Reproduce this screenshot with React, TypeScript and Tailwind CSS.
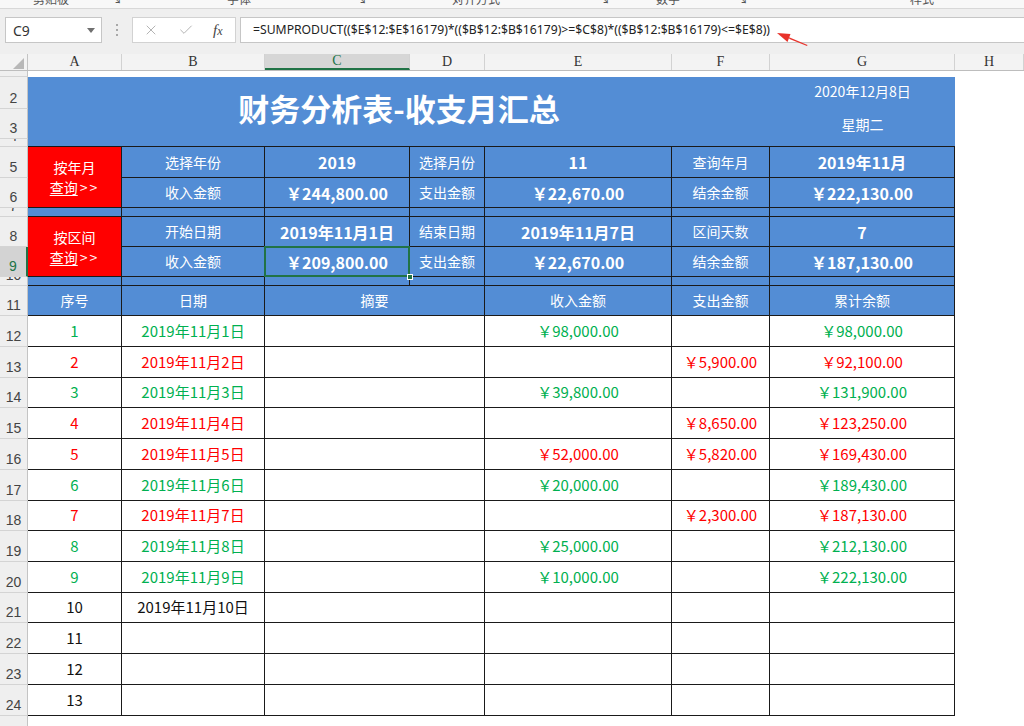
import React from 'react';
import { X, Check } from 'lucide-react';

// column widths (A..G) taken from the sheet, row header is 28px
const W = {
  A: 'w-[94px]',
  B: 'w-[143px]',
  C: 'w-[145px]',
  D: 'w-[75px]',
  E: 'w-[187px]',
  F: 'w-[98px]',
  G: 'w-[185px]',
  CD: 'w-[220px]',
};

const LABEL = 'bg-[#538dd5] text-white text-[14px]';
const VALUE = 'bg-[#538dd5] text-white text-[16px] font-bold';

function RowHead({ n, h, active = false }: { n: number; h: string; active?: boolean }) {
  return (
    <div
      className={`${h} w-[28px] shrink-0 flex items-end justify-center overflow-hidden border-b border-b-[#d4d4d4] font-['Liberation_Sans',sans-serif] text-[14px] leading-[17px] ${
        active
          ? 'bg-[#d3d3d3] text-[#217346] border-r-2 border-r-[#217346]'
          : 'bg-[#efefef] text-[#444] border-r border-r-[#c4c4c4]'
      }`}
    >
      <span className="pb-[1px]">{n}</span>
    </div>
  );
}

function Cell({ w, className = '', children }: { w: string; className?: string; children?: React.ReactNode }) {
  return (
    <div className={`${w} h-full shrink-0 flex items-center justify-center border-r border-b border-[#1a1a1a] ${className}`}>
      {children}
    </div>
  );
}

function ColHead({ w, label, active = false }: { w: string; label: string; active?: boolean }) {
  return (
    <div
      className={`${w} shrink-0 flex items-center justify-center border-r border-r-[#d2d2d2] ${
        active ? 'bg-[#d6d6d6] text-[#217346] border-b-2 border-b-[#217346]' : 'text-[#333]'
      }`}
    >
      {label}
    </div>
  );
}

function Filler() {
  return <div className="flex-1 h-full bg-white" />;
}

function ThinBand({ n }: { n: number }) {
  return (
    <div className="flex h-[9px]">
      <RowHead n={n} h="h-[9px]" />
      <Cell w={W.A} className="bg-[#538dd5]" />
      <Cell w={W.B} className="bg-[#538dd5]" />
      <Cell w={W.C} className="bg-[#538dd5]" />
      <Cell w={W.D} className="bg-[#538dd5]" />
      <Cell w={W.E} className="bg-[#538dd5]" />
      <Cell w={W.F} className="bg-[#538dd5]" />
      <Cell w={W.G} className="bg-[#538dd5]" />
      <Filler />
    </div>
  );
}

function QueryButton({ first }: { first: string }) {
  return (
    <div className="w-[94px] h-full shrink-0 bg-[#ff0000] border-r border-b border-[#1a1a1a] flex flex-col items-center justify-center text-white text-[14px] leading-[20px]">
      <span>{first}</span>
      <span>
        <span className="underline underline-offset-2">查询</span>
        <span className="tracking-[2px] pl-[2px]">&gt;&gt;</span>
      </span>
    </div>
  );
}

type Tone = 'g' | 'r' | 'k';

const toneClass: Record<Tone, string> = {
  g: 'text-[#00b050]',
  r: 'text-[#ff0000]',
  k: 'text-[#111]',
};

const records: { n: number; h: string; date: string; inc: string; exp: string; bal: string; tone: Tone }[] = [
  { n: 1, h: 'h-[31px]', date: '2019年11月1日', inc: '￥98,000.00', exp: '', bal: '￥98,000.00', tone: 'g' },
  { n: 2, h: 'h-[31px]', date: '2019年11月2日', inc: '', exp: '￥5,900.00', bal: '￥92,100.00', tone: 'r' },
  { n: 3, h: 'h-[30px]', date: '2019年11月3日', inc: '￥39,800.00', exp: '', bal: '￥131,900.00', tone: 'g' },
  { n: 4, h: 'h-[31px]', date: '2019年11月4日', inc: '', exp: '￥8,650.00', bal: '￥123,250.00', tone: 'r' },
  { n: 5, h: 'h-[31px]', date: '2019年11月5日', inc: '￥52,000.00', exp: '￥5,820.00', bal: '￥169,430.00', tone: 'r' },
  { n: 6, h: 'h-[31px]', date: '2019年11月6日', inc: '￥20,000.00', exp: '', bal: '￥189,430.00', tone: 'g' },
  { n: 7, h: 'h-[30px]', date: '2019年11月7日', inc: '', exp: '￥2,300.00', bal: '￥187,130.00', tone: 'r' },
  { n: 8, h: 'h-[31px]', date: '2019年11月8日', inc: '￥25,000.00', exp: '', bal: '￥212,130.00', tone: 'g' },
  { n: 9, h: 'h-[31px]', date: '2019年11月9日', inc: '￥10,000.00', exp: '', bal: '￥222,130.00', tone: 'g' },
  { n: 10, h: 'h-[30px]', date: '2019年11月10日', inc: '', exp: '', bal: '', tone: 'k' },
  { n: 11, h: 'h-[31px]', date: '', inc: '', exp: '', bal: '', tone: 'k' },
  { n: 12, h: 'h-[31px]', date: '', inc: '', exp: '', bal: '', tone: 'k' },
  { n: 13, h: 'h-[31px]', date: '', inc: '', exp: '', bal: '', tone: 'k' },
];

function TopBars() {
  return (
    <div className="relative">
      {/* bottom edge of the ribbon, group labels cut off */}
      <div className="h-[9px] overflow-hidden bg-[#f8f8f8] border-b border-[#d8d8d8] flex text-[12px] leading-[14px] text-[#555] font-['Noto_Sans_CJK_SC',sans-serif]">
        <span className="w-[33px] shrink-0" />
        <span className="w-[77px] shrink-0 -mt-[8px]">剪贴板</span>
        <span className="w-[117px] shrink-0 -mt-[8px]">↘</span>
        <span className="w-[128px] shrink-0 -mt-[8px]">字体</span>
        <span className="w-[97px] shrink-0 -mt-[8px]">↘</span>
        <span className="w-[146px] shrink-0 -mt-[8px]">对齐方式</span>
        <span className="w-[58px] shrink-0 -mt-[8px]">↘</span>
        <span className="w-[80px] shrink-0 -mt-[8px]">数字</span>
        <span className="w-[174px] shrink-0 -mt-[8px]">↘</span>
        <span className="shrink-0 -mt-[8px]">样式</span>
      </div>
      <div className="h-[45px] bg-[#efefef] flex items-start pt-[8px]">
        <div className="ml-[5px] w-[97px] h-[26px] shrink-0 bg-white border border-[#c6c6c6] flex items-center pl-[7px] pr-[6px] text-[14px] text-[#333] font-['Noto_Sans',sans-serif]">
          <span>C9</span>
          <svg className="ml-auto" width="8" height="5" viewBox="0 0 8 5">
            <polygon points="0,0 8,0 4,5" fill="#707070" />
          </svg>
        </div>
        <div className="w-[30px] h-[26px] shrink-0 flex flex-col items-center justify-center gap-[3px]">
          <span className="w-[2px] h-[2px] bg-[#a8a8a8]" />
          <span className="w-[2px] h-[2px] bg-[#a8a8a8]" />
          <span className="w-[2px] h-[2px] bg-[#a8a8a8]" />
        </div>
        <div className="w-[104px] h-[26px] shrink-0 bg-white border border-[#d2d2d2] flex items-center">
          <X className="ml-[10px] text-[#b4b4b4]" size={16} strokeWidth={1.5} />
          <Check className="ml-[19px] text-[#b4b4b4]" size={16} strokeWidth={1.5} />
          <span className="ml-[19px] italic text-[15px] text-[#444] font-['Liberation_Serif',serif]">
            f<span className="text-[12px]">x</span>
          </span>
        </div>
        <div className="ml-[4px] flex-1 h-[26px] bg-white border border-r-0 border-[#c6c6c6] flex items-center pl-[12px] text-[12.2px] text-[#222] font-['Noto_Sans',sans-serif] whitespace-nowrap overflow-hidden">
          =SUMPRODUCT(($E$12:$E$16179)*(($B$12:$B$16179)&gt;=$C$8)*(($B$12:$B$16179)&lt;=$E$8))
        </div>
      </div>
      {/* red annotation arrow */}
      <svg className="absolute left-[770px] top-[26px]" width="40" height="26" viewBox="0 0 40 26">
        <polygon points="7,7 20.5,8 17.5,16" fill="#e8332b" />
        <polygon points="18.5,11 19.5,13 37,20 37.5,19" fill="#e8332b" />
      </svg>
    </div>
  );
}

export default function App() {
  return (
    <div className="w-full h-[726px] overflow-hidden bg-white font-['Noto_Sans_CJK_SC',sans-serif]">
      <TopBars />

      {/* column letters */}
      <div className="flex h-[17px] bg-[#f3f3f3] border-b border-b-[#bdbdbd] text-[14px] leading-[16px] font-['Liberation_Serif',serif]">
        <div className="w-[28px] shrink-0 border-r border-r-[#c4c4c4] flex items-end justify-end pr-[3px] pb-[1px]">
          <svg width="11" height="11" viewBox="0 0 11 11">
            <polygon points="0,11 11,11 11,0" fill="#b8b8b8" />
          </svg>
        </div>
        <ColHead w={W.A} label="A" />
        <ColHead w={W.B} label="B" />
        <ColHead w={W.C} label="C" active />
        <ColHead w={W.D} label="D" />
        <ColHead w={W.E} label="E" />
        <ColHead w={W.F} label="F" />
        <ColHead w={W.G} label="G" />
        <ColHead w="w-[69px]" label="H" />
        <div className="flex-1" />
      </div>

      {/* row 1 */}
      <div className="flex h-[6px]">
        <RowHead n={1} h="h-[6px]" />
        <Filler />
      </div>

      {/* rows 2-3 : title */}
      <div className="flex h-[62px]">
        <div className="flex flex-col">
          <RowHead n={2} h="h-[32px]" />
          <RowHead n={3} h="h-[30px]" />
        </div>
        <div className="w-[742px] h-full shrink-0 bg-[#538dd5] flex items-center justify-center text-white text-[31px] font-bold">
          财务分析表-收支月汇总
        </div>
        <div className="w-[185px] h-full shrink-0 bg-[#538dd5] flex flex-col text-white text-[14px]">
          <div className="h-[32px] flex items-center justify-center pb-[3px]">2020年12月8日</div>
          <div className="h-[30px] flex items-center justify-center pt-[1px]">星期二</div>
        </div>
        <Filler />
      </div>

      {/* row 4 */}
      <div className="flex h-[8px]">
        <RowHead n={4} h="h-[8px]" />
        <div className="w-[927px] h-full shrink-0 bg-[#538dd5] border-b border-[#1a1a1a]" />
        <Filler />
      </div>

      {/* rows 5-6 : by month */}
      <div className="flex h-[61px]">
        <div className="flex flex-col">
          <RowHead n={5} h="h-[31px]" />
          <RowHead n={6} h="h-[30px]" />
        </div>
        <QueryButton first="按年月" />
        <div className="flex flex-col">
          <div className="flex h-[31px]">
            <Cell w={W.B} className={LABEL}>选择年份</Cell>
            <Cell w={W.C} className={VALUE}>2019</Cell>
            <Cell w={W.D} className={LABEL}>选择月份</Cell>
            <Cell w={W.E} className={VALUE}>11</Cell>
            <Cell w={W.F} className={LABEL}>查询年月</Cell>
            <Cell w={W.G} className={VALUE}>2019年11月</Cell>
          </div>
          <div className="flex h-[30px]">
            <Cell w={W.B} className={LABEL}>收入金额</Cell>
            <Cell w={W.C} className={VALUE}>￥244,800.00</Cell>
            <Cell w={W.D} className={LABEL}>支出金额</Cell>
            <Cell w={W.E} className={VALUE}>￥22,670.00</Cell>
            <Cell w={W.F} className={LABEL}>结余金额</Cell>
            <Cell w={W.G} className={VALUE}>￥222,130.00</Cell>
          </div>
        </div>
        <Filler />
      </div>

      <ThinBand n={7} />

      {/* rows 8-9 : by range */}
      <div className="flex h-[60px]">
        <div className="flex flex-col">
          <RowHead n={8} h="h-[30px]" />
          <RowHead n={9} h="h-[30px]" active />
        </div>
        <QueryButton first="按区间" />
        <div className="flex flex-col">
          <div className="flex h-[30px]">
            <Cell w={W.B} className={LABEL}>开始日期</Cell>
            <Cell w={W.C} className={VALUE}>2019年11月1日</Cell>
            <Cell w={W.D} className={LABEL}>结束日期</Cell>
            <Cell w={W.E} className={VALUE}>2019年11月7日</Cell>
            <Cell w={W.F} className={LABEL}>区间天数</Cell>
            <Cell w={W.G} className={VALUE}>7</Cell>
          </div>
          <div className="flex h-[30px]">
            <Cell w={W.B} className={LABEL}>收入金额</Cell>
            <Cell w={W.C} className={`${VALUE} relative`}>
              ￥209,800.00
              <span className="absolute -left-px -top-px w-[146px] h-[31px] border-2 border-[#217346]" />
              <span className="absolute -right-[4px] -bottom-[4px] w-[6px] h-[6px] bg-[#217346] border border-white z-10" />
            </Cell>
            <Cell w={W.D} className={LABEL}>支出金额</Cell>
            <Cell w={W.E} className={VALUE}>￥22,670.00</Cell>
            <Cell w={W.F} className={LABEL}>结余金额</Cell>
            <Cell w={W.G} className={VALUE}>￥187,130.00</Cell>
          </div>
        </div>
        <Filler />
      </div>

      <ThinBand n={10} />

      {/* row 11 : list header */}
      <div className="flex h-[30px]">
        <RowHead n={11} h="h-[30px]" />
        <Cell w={W.A} className={LABEL}>序号</Cell>
        <Cell w={W.B} className={LABEL}>日期</Cell>
        <Cell w={W.CD} className={LABEL}>摘要</Cell>
        <Cell w={W.E} className={LABEL}>收入金额</Cell>
        <Cell w={W.F} className={LABEL}>支出金额</Cell>
        <Cell w={W.G} className={LABEL}>累计余额</Cell>
        <Filler />
      </div>

      {/* rows 12-24 : entries */}
      {records.map((r) => (
        <div key={r.n} className={`flex ${r.h}`}>
          <RowHead n={r.n + 11} h={r.h} />
          <div className={`flex h-full text-[15px] ${toneClass[r.tone]}`}>
            <Cell w={W.A}>{r.n}</Cell>
            <Cell w={W.B}>{r.date}</Cell>
            <Cell w={W.CD} />
            <Cell w={W.E}>{r.inc}</Cell>
            <Cell w={W.F}>{r.exp}</Cell>
            <Cell w={W.G}>{r.bal}</Cell>
          </div>
          <Filler />
        </div>
      ))}

      {/* row 25, cut by the window */}
      <div className="flex h-[31px]">
        <RowHead n={25} h="h-[31px]" />
        <Filler />
      </div>
    </div>
  );
}
